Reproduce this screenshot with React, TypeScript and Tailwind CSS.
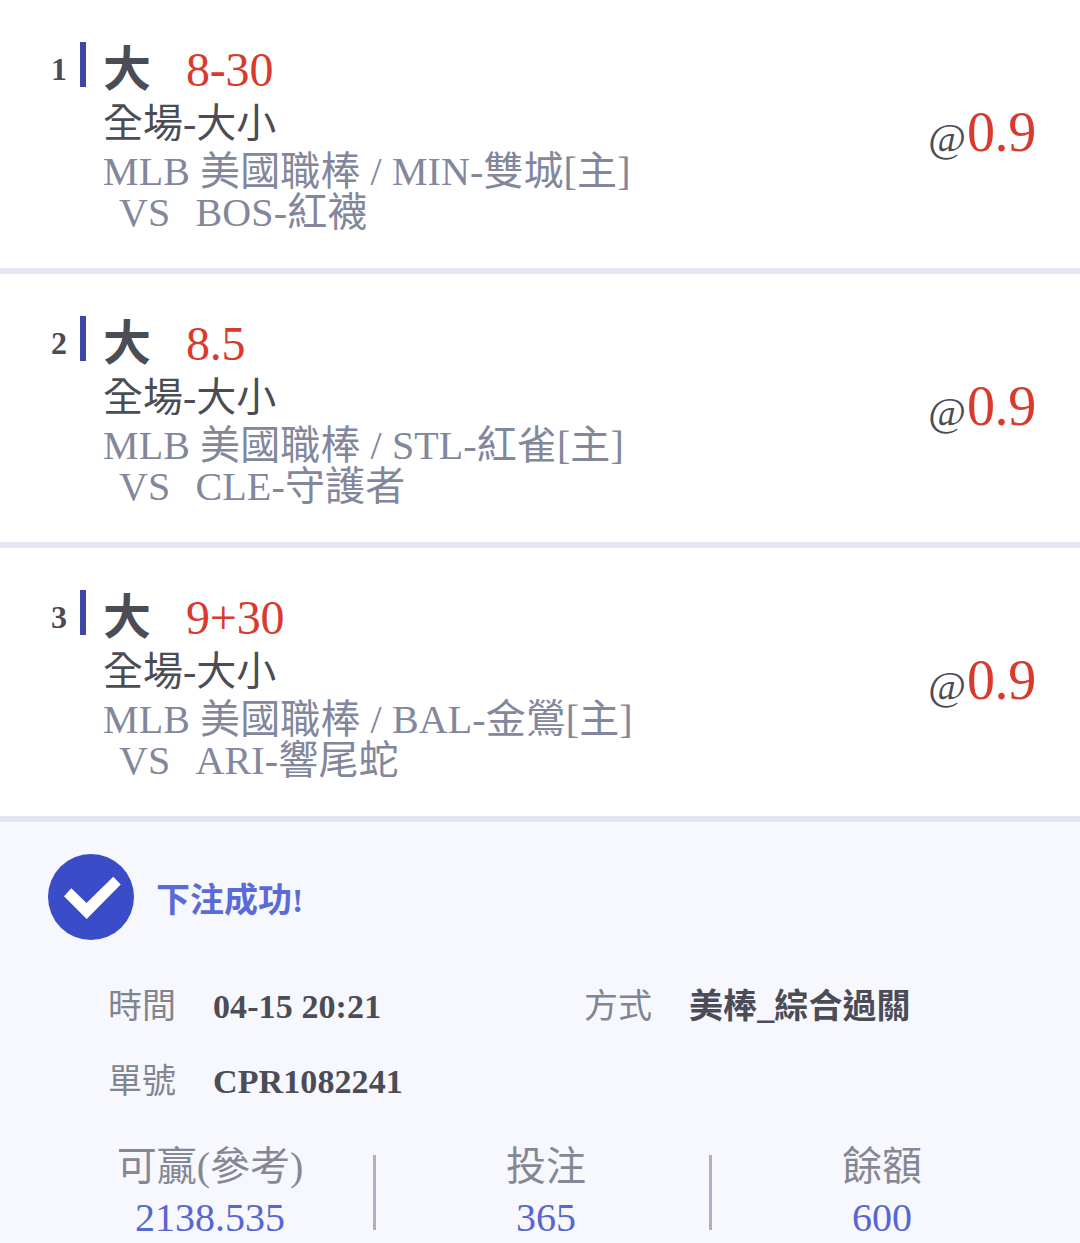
type Bet = {
  line: string;
  home: string;
  away: string;
  odds: string;
};

const bets: Bet[] = [
  { line: '8-30', home: 'MIN-雙城', away: 'BOS-紅襪', odds: '0.9' },
  { line: '8.5', home: 'STL-紅雀', away: 'CLE-守護者', odds: '0.9' },
  { line: '9+30', home: 'BAL-金鶯', away: 'ARI-響尾蛇', odds: '0.9' },
];

const totals = [
  { label: '可贏(參考)', value: '2138.535' },
  { label: '投注', value: '365' },
  { label: '餘額', value: '600' },
];

function BetRow({ bet, index }: { bet: Bet; index: number }) {
  return (
    <li className="flex h-[274px] items-start border-b-[6px] border-[#e4e4f2] pr-[44px] pl-[51px]">
      <span className="mt-[49px] w-[29px] text-[32px] leading-[40px] font-bold">{index + 1}</span>
      <span className="mt-[42px] h-[45px] w-[6px] bg-[#3d45a5]" />
      <div className="ml-[17px] flex-1 text-[40px] leading-[41px] whitespace-nowrap text-[#82879c]">
        <div className="mt-[42px] flex text-[48px] leading-[56px]">
          <span className="font-bold text-[#4b4c56]">大</span>
          <span className="ml-[35px] tracking-[-0.2px] text-[#d93a2e]">{bet.line}</span>
        </div>
        <div className="mt-[5px] text-[#4b4c56]">全場-大小</div>
        <div className="mt-[7px] tracking-[0.1px]">MLB 美國職棒 / {bet.home}[主]</div>
        <div className="flex pl-[16px] tracking-[0.15px]">
          <span>VS</span>
          <span className="ml-[25px]">{bet.away}</span>
        </div>
      </div>
      <div className="mt-[102px] flex items-baseline text-[41px] leading-[60px]">
        <span className="mr-[1px]">@</span>
        <span className="text-[56px] tracking-[-0.3px] text-[#d93a2e]">{bet.odds}</span>
      </div>
    </li>
  );
}

function Field({ label, value }: { label: string; value: string }) {
  return (
    <div className="flex">
      <dt className="w-[105px] text-[#82858f]">{label}</dt>
      <dd className="font-bold tracking-[0.1px]">{value}</dd>
    </div>
  );
}

export default function App() {
  return (
    <main
      lang="zh-Hant"
      className="flex h-[1243px] w-[1080px] flex-col overflow-hidden bg-white font-['Liberation_Serif','Noto_Sans_CJK_TC',serif] text-[#4b4c56]"
    >
      <ol>
        {bets.map((bet, i) => (
          <BetRow key={bet.home} bet={bet} index={i} />
        ))}
      </ol>
      <section className="flex-1 bg-[#f7f8fe]">
        <div className="flex items-center pt-[32px] pl-[48px]">
          <svg className="h-[86px] w-[86px]" viewBox="0 0 86 86" aria-hidden="true">
            <circle cx="43" cy="43" r="43" fill="#3a4cc8" />
            <path d="M16 42.3 23.3 34.3 38.5 49 65.3 22.7 72.7 30.5 38.7 65Z" fill="#fff" />
          </svg>
          <h2 className="mt-[8px] ml-[22px] text-[34px] leading-[40px] font-bold text-[#5b6bd5]">下注成功!</h2>
        </div>
        <dl className="mt-[47px] grid grid-cols-[476px_1fr] gap-y-[35px] pl-[108px] text-[34px] leading-[40px]">
          <Field label="時間" value="04-15 20:21" />
          <Field label="方式" value="美棒_綜合過關" />
          <Field label="單號" value="CPR1082241" />
        </dl>
        <div className="mt-[39px] flex px-[42px] text-center text-[40px] leading-[51px]">
          {totals.map((t, i) => (
            <div key={t.label} className="flex w-[336px] shrink-0">
              <div className="flex-1 pl-[5px]">
                <div className="text-[#858894]">{t.label}</div>
                <div className="text-[#5767cf]">{t.value}</div>
              </div>
              <span className={i < 2 ? 'mt-[14px] mr-[2px] h-[75px] w-[3px] bg-[#b1aec6]' : 'mr-[2px] w-[3px]'} />
            </div>
          ))}
        </div>
      </section>
    </main>
  );
}
